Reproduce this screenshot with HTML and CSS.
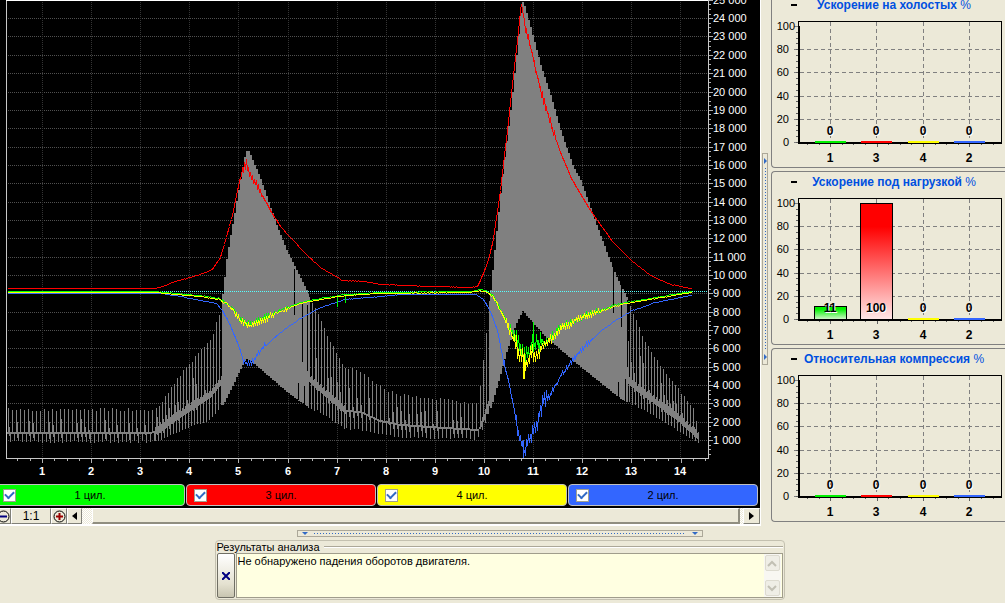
FILE: index.html
```html
<!DOCTYPE html>
<html lang="ru">
<head>
<meta charset="utf-8">
<title>Результаты анализа</title>
<link rel="stylesheet" href="styles.css">
</head>
<body>
<main class="workspace">
  <section class="scope">
    <svg class="plot" id="plot" viewBox="0 0 760 483" role="img" aria-label="Обороты двигателя"></svg>
    <div class="legend">
      <label class="channel channel-green"><input type="checkbox" checked><span>1 цил.</span></label>
      <label class="channel channel-red"><input type="checkbox" checked><span>3 цил.</span></label>
      <label class="channel channel-yellow"><input type="checkbox" checked><span>4 цил.</span></label>
      <label class="channel channel-blue"><input type="checkbox" checked><span>2 цил.</span></label>
    </div>
    <div class="toolbar">
      <button class="tool tool-minus" aria-label="Уменьшить"><svg width="13" height="13" viewBox="0 0 13 13"><circle cx="6.500" cy="6.500" r="5.500" fill="none" stroke="#000"/><path d="M3 6.500h7" stroke="#000080" stroke-width="2"/></svg></button>
      <button class="tool tool-ratio">1:1</button>
      <button class="tool tool-plus" aria-label="Увеличить"><svg width="13" height="13" viewBox="0 0 13 13"><circle cx="6.500" cy="6.500" r="5.500" fill="none" stroke="#000"/><path d="M3 6.500h7M6.500 3v7" stroke="#900" stroke-width="2"/></svg></button>
      <button class="tool tool-left" aria-label="Влево"><svg width="5" height="8" viewBox="0 0 5 8"><path d="M5 0v8L0 4z"/></svg></button>
      <div class="track"><div class="thumb"></div></div>
      <button class="tool tool-right" aria-label="Вправо"><svg width="5" height="8" viewBox="0 0 5 8"><path d="M0 0v8l5-4z"/></svg></button>
    </div>
  </section>
  <div class="gutter">
    <div class="splitter splitter-vertical">
      <svg width="3" height="6" viewBox="0 0 3 6"><path d="M0 0v6l3-3z" fill="#316ac5"/></svg>
      <span class="dots"></span>
      <svg width="3" height="6" viewBox="0 0 3 6"><path d="M0 0v6l3-3z" fill="#316ac5"/></svg>
    </div>
  </div>
  <aside class="sidebar">
    <section class="panel">
      <header class="panel-head"><button class="collapse" aria-label="Свернуть"></button><h2>Ускорение на холостых <span>%</span></h2></header>
      <svg class="bars" viewBox="0 0 233 152" data-values="0,0,0,0"></svg>
    </section>
    <section class="panel">
      <header class="panel-head"><button class="collapse" aria-label="Свернуть"></button><h2>Ускорение под нагрузкой <span>%</span></h2></header>
      <svg class="bars" viewBox="0 0 233 152" data-values="11,100,0,0"></svg>
    </section>
    <section class="panel">
      <header class="panel-head"><button class="collapse" aria-label="Свернуть"></button><h2>Относительная компрессия <span>%</span></h2></header>
      <svg class="bars" viewBox="0 0 233 152" data-values="0,0,0,0"></svg>
    </section>
  </aside>
</main>
<footer class="results-area">
  <div class="splitter splitter-horizontal">
    <svg width="6" height="3" viewBox="0 0 6 3"><path d="M0 0h6L3 3z" fill="#316ac5"/></svg>
    <span class="dots"></span>
    <svg width="6" height="3" viewBox="0 0 6 3"><path d="M0 0h6L3 3z" fill="#316ac5"/></svg>
  </div>
  <section class="results">
    <div class="results-head"><label for="log">Результаты анализа</label><span class="rule"></span></div>
    <div class="results-body">
      <button class="close" aria-label="Закрыть"><svg width="8" height="8" viewBox="0 0 8 8"><path d="M0 0l8 8M8 0L0 8" stroke="#000080" stroke-width="2"/></svg></button>
      <div class="log-box">
        <textarea id="log" readonly>Не обнаружено падения оборотов двигателя.</textarea>
        <div class="scroll">
          <button aria-label="Вверх"><svg width="10" height="7" viewBox="0 0 10 7"><path d="M1 6l4-4 4 4" fill="none" stroke="#c2c0b4" stroke-width="2"/></svg></button>
          <button aria-label="Вниз"><svg width="10" height="7" viewBox="0 0 10 7"><path d="M1 1l4 4 4-4" fill="none" stroke="#c2c0b4" stroke-width="2"/></svg></button>
        </div>
      </div>
    </div>
  </section>
</footer>
<script src="charts.js"></script>
</body>
</html>
```
FILE: styles.css
```css
* { box-sizing: border-box; }
body {
  margin: 0;
  min-height: 100vh;
  overflow: hidden;
  background: #ece9d8;
  color: #000;
  font: 11px/13px "Liberation Sans", Arial, sans-serif;
}
button { font: inherit; color: inherit; padding: 0; margin: 0; }
.workspace {
  display: grid;
  grid-template-columns: minmax(0, 1fr) 11px 234px;
  align-items: start;
}
.scope { border-bottom: 2px solid #fff; }
.plot { display: block; width: 100%; height: auto; background: #000; }
.plot text { fill: #fff; font-size: 11px; }
.plot .time { font-weight: bold; text-anchor: middle; }

.legend { display: flex; gap: 1px; height: 25px; padding: 1px 2px 2px 0; background: #000; }
.channel {
  flex: 1;
  display: flex;
  align-items: center;
  padding-left: 7px;
  border: 1px solid #c0c0c0;
  border-radius: 4px;
}
.channel span { flex: 1; text-align: center; padding-right: 20px; }
.channel-green { background: #0f0; margin-left: -5px; }
.channel-red { background: #f00; }
.channel-yellow { background: #ff0; }
.channel-blue { background: #36f; }
.channel input {
  appearance: none;
  display: grid;
  place-items: center;
  width: 13px;
  height: 13px;
  margin: 0;
  background: #fff;
  border: 1px solid #a0a090;
}
.channel input:checked::after {
  content: "";
  width: 7px;
  height: 4px;
  margin-bottom: 3px;
  border: solid #316ac5;
  border-width: 0 0 2px 2px;
  transform: rotate(-45deg);
}

.toolbar { display: flex; height: 16px; background: #ece9d8; }
.tool {
  display: flex;
  align-items: center;
  justify-content: center;
  background: #ece9d8;
  border: 1px solid;
  border-color: #fff #808078 #808078 #fff;
}
.tool-minus { width: 16px; margin-left: -5px; }
.tool-ratio { width: 40px; font-size: 12px; }
.tool-plus { width: 16px; }
.tool-left { width: 15px; }
.tool-right { width: 17px; }
.track {
  flex: 1;
  padding: 0 3px 0 10px;
  background: repeating-conic-gradient(#fff 0 25%, #ece9d8 0 50%) 0 0 / 2px 2px;
}
.thumb {
  height: 100%;
  background: #ece9d8;
  border: solid;
  border-width: 1px 2px 2px 1px;
  border-color: #fff #908e80 #908e80 #fff;
}

.gutter { align-self: stretch; padding: 153px 3px 0 1px; border-left: 1px solid #fff; }
.splitter { display: flex; align-items: center; justify-content: space-between; border: 1px solid #aca899; }
.splitter svg { display: block; }
.splitter-vertical { flex-direction: column; height: 212px; padding: 4px 0; }
.splitter-vertical .dots {
  flex: 1;
  width: 1px;
  margin: 4px 0;
  background: repeating-linear-gradient(#316ac5 0 1px, transparent 1px 3px);
}

.sidebar { display: grid; gap: 3px; margin-top: -6px; }
.panel { border: 1px solid #808080; border-right: 0; border-radius: 4px 0 0 4px; }
.panel-head { position: relative; height: 20px; display: flex; align-items: center; justify-content: center; padding-left: 11px; }
.panel-head h2 { margin: 0; color: #0050e0; font-size: 12px; line-height: 20px; white-space: nowrap; }
.panel-head h2 span { font-weight: normal; }
.collapse { position: absolute; left: 19px; top: 9px; width: 6px; height: 2px; border: 0; background: #000; }
.bars { display: block; width: 100%; height: auto; }
.bars .scale { font-size: 11px; text-anchor: end; }
.bars .name { font-size: 12px; font-weight: bold; text-anchor: middle; }
.bars .value { font-size: 12px; font-weight: bold; text-anchor: middle; text-shadow: 1px 1px 0 #fff; }

.results-area { display: flex; flex-direction: column; align-items: center; gap: 3px; padding: 4px 6px 0 0; }
.splitter-horizontal { width: 406px; height: 7px; padding: 0 4px; }
.splitter-horizontal .dots {
  flex: 1;
  height: 1px;
  margin: 0 6px;
  background: repeating-linear-gradient(90deg, #316ac5 0 1px, transparent 1px 3px);
}
.results { width: 570px; padding: 0 1px; border: 1px solid #c4c1b0; border-radius: 4px; }
.results-head { display: flex; align-items: center; gap: 4px; height: 12px; }
.rule { flex: 1; height: 2px; border-top: 1px solid #aca899; border-bottom: 1px solid #fff; }
.results-body { display: flex; gap: 1px; height: 46px; padding-bottom: 1px; }
.close {
  display: grid;
  place-items: center;
  width: 18px;
  background: linear-gradient(#fff, #e4e1d0 70%, #c8c5b0);
  border: 1px solid #706f64;
  border-radius: 2px;
}
.log-box { flex: 1; display: flex; padding: 0 1px; border: 1px solid #a09d8c; background: #ffffe1; }
.log-box textarea { flex: 1; margin: 0; padding: 1px 0; border: 0; outline: 0; resize: none; overflow: hidden; background: transparent; color: #000; font: 11px/13px "Liberation Sans", Arial, sans-serif; }
.scroll { display: flex; flex-direction: column; justify-content: space-between; width: 17px; padding: 1px; background: #f8f7f2; }
.scroll button { display: grid; place-items: center; height: 16px; background: #efeee6; border: 1px solid #dddbd0; border-radius: 2px; }
```
FILE: charts.js
```js
const NS = "http://www.w3.org/2000/svg";

function add(parent, tag, attrs, text) {
  const el = document.createElementNS(NS, tag);
  for (const key in attrs) el.setAttribute(key, attrs[key]);
  if (text !== undefined) el.textContent = text;
  parent.appendChild(el);
  return el;
}

function toPoints(list) {
  const pts = [];
  for (let i = 0; i < list.length; i += 2) pts.push([list[i], list[i + 1]]);
  return pts;
}

function at(pts, x) {
  if (x <= pts[0][0]) return pts[0][1];
  for (let i = 1; i < pts.length; i++) {
    if (x <= pts[i][0]) {
      const [ax, ay] = pts[i - 1];
      const [bx, by] = pts[i];
      return ay + (by - ay) * (x - ax) / (bx - ax);
    }
  }
  return pts[pts.length - 1][1];
}

let seed = 7;
function random() {
  seed = (seed * 16807) % 2147483647;
  return seed / 2147483647;
}

function drawPlot(svg) {
  const root = add(svg, "g", { "shape-rendering": "crispEdges" });

  for (let k = 1; k <= 24; k++) {
    const y = Math.round(458.5 - k * 18.35) + 0.5;
    add(root, "path", { d: `M8 ${y}H708`, stroke: "#505050", "stroke-dasharray": "1 1" });
  }
  for (let n = 1; n <= 14; n++) {
    const x = Math.round(42 + (n - 1) * 49.1) + 0.5;
    add(root, "path", { d: `M${x} 2V458`, stroke: "#343434", "stroke-dasharray": "1 1" });
  }

  const upper = toPoints([7,408, 150,408, 160,403, 165,395, 175,380, 190,362, 200,350, 212,335, 219,312, 223,288, 225,265, 230,235, 238,190, 245,151, 248,151, 250,155, 258,174, 265,193, 275,222, 285,248, 292,262, 300,278, 307,292, 315,307, 325,330, 345,367, 355,367, 380,384, 395,393, 420,395, 450,399, 477,403, 480,385, 483,360, 487,320, 490,290, 492,270, 495,240, 503,165, 510,110, 516,55, 521,2, 523,2, 530,27, 540,65, 550,95, 560,130, 572,165, 580,180, 600,236, 615,275, 630,305, 645,340, 660,364, 680,390, 695,410, 698,440]);
  const lower = toPoints([7,443, 155,443, 160,441, 190,428, 210,421, 217,413, 225,400, 245,359, 249,360, 255,365, 270,378, 290,395, 307,407, 320,414, 330,421, 345,430, 360,431, 380,435, 400,438, 430,439, 475,440, 480,437, 488,415, 495,392, 505,355, 515,325, 522,311, 545,337, 580,367, 620,399, 650,415, 680,433, 698,443]);
  const middle = toPoints([7,433, 150,433, 160,430, 172,420, 190,408, 210,395, 222,380, 300,370, 315,385, 330,398, 345,411, 360,412, 380,421, 400,425, 430,427, 478,430, 482,422, 490,400, 620,375, 640,391, 660,405, 680,420, 698,437]);

  let bars = "";
  const column = (x, a, b) => { bars += `M${x + 0.5} ${Math.round(a)}V${Math.round(b)}`; };
  for (let x = 7; x < 699; x++) {
    const solid = (x >= 222 && x < 309) || (x >= 490 && x < 628);
    const u = at(upper, x), l = at(lower, x), m = at(middle, x);
    if (solid) {
      const step = x - x % 2;
      column(x, at(upper, step), at(lower, step));
      continue;
    }
    const idle = x < 155 || (x > 345 && x < 480);
    const thick = idle ? 1 : 3;
    column(x, m - thick, m + thick);
    const period = idle ? 4 : 3;
    const phase = x % period;
    if (phase === 0) column(x, u + random() * 3, m);
    else if (phase === 2) column(x, m - (idle ? 1 : 5), l - random() * 2);
    else if (phase === 1 && random() > 0.5) column(x, m - 2 - random() * (m - u) * (idle ? 0.5 : 0.6), m + 2 + random() * 5);
  }
  add(root, "path", { d: bars, stroke: "#808080" });

  const slits = [[218,325,377], [221,310,370], [294,269,315], [298,383,400], [302,303,362], [307,305,371], [304,386,405], [613,267,313], [621,278,327], [627,300,367], [618,382,400], [625,379,401]];
  for (const [x, a, b] of slits) add(root, "path", { d: `M${x + 0.5} ${a}V${b}`, stroke: "#000" });

  add(root, "path", { d: "M8 291.500H708", stroke: "#5ff", "stroke-dasharray": "1 1" });

  function series(list, color, noise) {
    const pts = toPoints(list);
    let d = "";
    for (let x = pts[0][0]; x <= 691; x++) {
      const sign = noise(x) > 2 ? (x % 2 ? 1 : -1) : (random() < 0.5 ? 1 : -1);
      const y = Math.max(1, Math.min(457, at(pts, x) + sign * random() * noise(x)));
      d += `${d ? "L" : "M"}${x + 0.5} ${Math.round(y) + 0.5}`;
    }
    add(root, "path", { d, stroke: color, fill: "none" });
  }
  series([7,293, 160,293, 180,296, 200,300, 216,303, 222,310, 230,325, 238,345, 244,362, 248,364, 253,360, 262,348, 280,332, 300,318, 320,307, 345,299, 380,296, 400,294, 476,294, 483,299, 490,311, 497,330, 503,360, 509,385, 515,415, 519,440, 524,450, 530,435, 537,424, 542,403, 550,394, 560,376, 575,356, 583,347, 600,331, 615,320, 632,310, 655,302, 691,295], "#36f",
    x => x > 514 && x < 548 ? 9 : (x > 240 && x < 265) || (x > 500 && x < 590) ? 3 : 0.3);
  add(root, "path", { d: "M523.500 440V458", stroke: "#36f" });
  const dip = [7,292, 155,292, 175,294, 200,296, 218,299, 225,303, 233,310, 240,320, 246,324, 250,325, 256,322, 265,318, 280,311, 300,303, 320,299, 345,295, 380,293, 470,292, 480,290, 487,292, 493,297, 500,310, 508,327, 515,345, 520,356, 524,362, 528,359, 535,352, 545,344, 560,329, 575,320, 595,312, 620,304, 650,299, 691,292];
  const noise = x => x > 513 && x < 542 ? 12 : x > 505 && x < 570 ? 5 : (x > 233 && x < 275) || (x > 569 && x < 600) ? 3 : (x > 217 && x < 290) || (x > 490 && x < 620) ? 1.5 : 0.3;
  const green = dip.map((v, i) => i % 2 ? v - (dip[i - 1] > 512 && dip[i - 1] < 545 ? 9 : 1) : v);
  series(green, "#0f0", noise);
  add(root, "path", { d: "M337.500 295V307M345.500 295V303M533.500 322V350", stroke: "#0f0" });
  series(dip, "#ff0", noise);
  add(root, "path", { d: "M524 355V379", stroke: "#ff0", "stroke-width": 2 });
  series([7,288, 155,288, 165,285, 175,281, 190,277, 205,272, 212,269, 220,257, 225,240, 232,215, 237,190, 241,173, 246,163, 250,174, 258,188, 270,210, 280,226, 290,237, 305,253, 320,267, 342,280, 365,281, 380,284, 430,286, 470,287, 477,286, 480,280, 485,268, 489,256, 493,238, 500,190, 507,130, 513,75, 517,40, 521,2, 524,22, 532,55, 540,90, 548,115, 560,152, 572,180, 590,210, 612,241, 630,259, 650,275, 670,284, 691,288], "#f00",
    x => (x > 239 && x < 262) || (x > 519 && x < 556) ? 5 : 0.3);

  add(root, "path", { d: "M6.500 0V458.500H708.500V0", stroke: "#c8c8c8", fill: "none" });
  add(root, "path", { d: "M6 .5H708", stroke: "#fff" });
  let ticks = "";
  for (let i = -3; i <= 54; i++) {
    const x = Math.round(42 + i * 12.28) + 0.5;
    if (x > 8 && x < 708) ticks += `M${x} 459v${i % 4 === 0 ? 4 : 2}`;
  }
  for (let i = 1; i <= 100; i++) ticks += `M709 ${Math.round(458.5 - i * 4.5875) + 0.5}h${i % 4 === 0 ? 4 : 2}`;
  add(root, "path", { d: ticks, stroke: "#b0b0b0" });

  for (let k = 1; k <= 25; k++) {
    add(svg, "text", { x: 713, y: Math.round(462.5 - k * 18.35) }, `${k} 000`);
  }
  for (let n = 1; n <= 14; n++) {
    add(svg, "text", { x: Math.round(42 + (n - 1) * 49.1), y: 475, class: "time" }, n);
  }
}

function drawBars(svg, index) {
  const values = svg.dataset.values.split(",").map(Number);
  const names = ["1", "3", "4", "2"];
  const colors = ["#00f000", "#ff0000", "#ffff00", "#3366ff"];
  const pale = ["#d8f8d0", "#ffe8e8", "#ffffe0", "#e0e8ff"];
  const centers = [58, 104, 151, 197];
  const g = add(svg, "g", { "shape-rendering": "crispEdges" });
  const levelY = v => Math.round(127 - v * 1.16);

  for (let v = 0; v <= 100; v += 20) {
    const y = levelY(v) + 0.5;
    if (v > 0 && v < 100) add(g, "path", { d: `M28 ${y}H229`, stroke: "#808080", "stroke-dasharray": "4 3" });
    add(g, "path", { d: `M22 ${y}h4`, stroke: "#808080" });
    add(svg, "text", { x: v === 100 ? 23 : 17, y: levelY(v) + 4, class: "scale" }, v);
  }
  for (const x of centers) add(g, "path", { d: `M${x + 0.5} 7V126`, stroke: "#808080", "stroke-dasharray": "4 3" });
  let ticks = "";
  for (let i = 0; i < 17; i++) ticks += `M${Math.round(35 + i * 11.6) + 0.5} 129v${(i + 2) % 4 === 0 ? 3 : 1}`;
  for (let i = 0; i < 20; i++) ticks += `M24 ${Math.round(127 - i * 5.8) + 0.5}h2`;
  add(g, "path", { d: ticks, stroke: "#606060" });
  add(g, "path", { d: "M26.500 127V6.500H229.500V128", stroke: "#000", fill: "none" });
  add(g, "path", { d: "M27 11V129M26 128H230", stroke: "#000", "stroke-width": 2 });

  values.forEach((value, i) => {
    const c = centers[i];
    if (value) {
      const id = `fill-${index}-${i}`;
      const gradient = add(svg, "linearGradient", { id, x1: 0, y1: 0, x2: 0, y2: 1 });
      add(gradient, "stop", { offset: 0, "stop-color": colors[i] });
      add(gradient, "stop", { offset: 0.2, "stop-color": colors[i] });
      add(gradient, "stop", { offset: 1, "stop-color": pale[i] });
      const y = levelY(value);
      add(g, "rect", { x: c - 15.5, y: y + 0.5, width: 32, height: 127 - y, fill: `url(#${id})`, stroke: "#000" });
    } else {
      add(g, "rect", { x: c - 15, y: 126, width: 31, height: 2, fill: colors[i] });
    }
    add(svg, "text", { x: c, y: 120, class: "value" }, value);
    add(svg, "text", { x: c, y: 147, class: "name" }, names[i]);
  });
}

drawPlot(document.getElementById("plot"));
document.querySelectorAll(".bars").forEach(drawBars);
```
